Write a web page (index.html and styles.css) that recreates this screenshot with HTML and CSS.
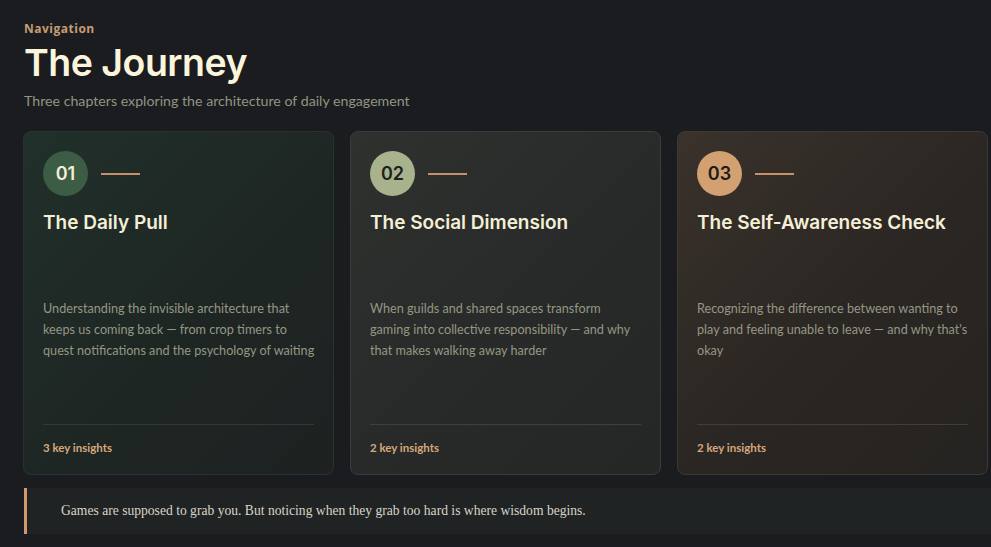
FILE: index.html
```html
<!DOCTYPE html>
<html lang="en">
<head>
<meta charset="utf-8">
<title>The Journey</title>
<link rel="stylesheet" href="styles.css">
</head>
<body>
<main class="page">
  <header class="intro">
    <div class="eyebrow">Navigation</div>
    <h1 class="title">The Journey</h1>
    <p class="subtitle">Three chapters exploring the architecture of daily engagement</p>
  </header>

  <section class="cards">
    <article class="card card-green">
      <div class="card-head">
        <span class="num num-green">01</span>
        <span class="rule"></span>
      </div>
      <h2 class="card-title">The Daily Pull</h2>
      <p class="card-desc">Understanding the invisible architecture that keeps us coming back — from crop timers to quest notifications and the psychology of waiting</p>
      <div class="card-foot">3 key insights</div>
    </article>
    <article class="card card-sage">
      <div class="card-head">
        <span class="num num-sage">02</span>
        <span class="rule"></span>
      </div>
      <h2 class="card-title">The Social Dimension</h2>
      <p class="card-desc">When guilds and shared spaces transform gaming into collective responsibility — and why that makes walking away harder</p>
      <div class="card-foot">2 key insights</div>
    </article>
    <article class="card card-tan">
      <div class="card-head">
        <span class="num num-tan">03</span>
        <span class="rule"></span>
      </div>
      <h2 class="card-title">The Self-Awareness Check</h2>
      <p class="card-desc">Recognizing the difference between wanting to play and feeling unable to leave — and why that's okay</p>
      <div class="card-foot">2 key insights</div>
    </article>
  </section>

  <blockquote class="quote">Games are supposed to grab you. But noticing when they grab too hard is where wisdom begins.</blockquote>
</main>
</body>
</html>
```

FILE: styles.css
```css
* { box-sizing: border-box; }
html, body { margin: 0; padding: 0; }
body {
  background: #1b1c20;
  font-family: Lato, "Open Sans", sans-serif;
  color: #e9e4cf;
  overflow: hidden;
  width: 991px;
  height: 547px;
}
.page {
  padding: 21px 0 0 23px;
  width: 1010px;
}
.intro { padding-left: 1px; }
.eyebrow {
  font-family: "Open Sans", sans-serif;
  font-size: 12px;
  line-height: 16px;
  font-weight: 700;
  letter-spacing: 0.5px;
  color: #c89c74;
}
.title {
  margin: 3px 0 0;
  font-family: Inter, sans-serif;
  font-size: 37.5px;
  line-height: 46px;
  font-weight: 600;
  letter-spacing: -0.5px;
  color: #fbf5dc;
}
.subtitle {
  margin: 5px 0 0;
  font-size: 14.2px;
  line-height: 20px;
  font-weight: 400;
  color: #8f9584;
}
.cards {
  display: grid;
  grid-template-columns: 311px 311px 311px;
  gap: 16px;
  margin-top: 20px;
}
.card {
  height: 344px;
  border-radius: 8px;
  border: 1px solid #2b302f;
  padding: 19px 17px 18px 19px;
  display: flex;
  flex-direction: column;
}
.card-green {
  background: linear-gradient(135deg, #21302a 0%, #1e2624 55%, #1d2221 100%);
  border-color: #283230;
}
.card-sage {
  background: linear-gradient(135deg, #2e312e 0%, #272a28 55%, #242726 100%);
  border-color: #3a3d3a;
}
.card-tan {
  background: linear-gradient(135deg, #3a322b 0%, #2a2623 55%, #252321 100%);
  border-color: #3c3834;
}
.card-head {
  display: flex;
  align-items: center;
  gap: 13px;
}
.num {
  width: 45px;
  height: 45px;
  border-radius: 50%;
  display: flex;
  align-items: center;
  justify-content: center;
  font-family: Inter, sans-serif;
  font-size: 18px;
  font-weight: 600;
}
.num-green { background: #3d5c45; color: #f3eed8; }
.num-sage { background: #a8b28d; color: #1d201c; }
.num-tan { background: #d3a072; color: #1d1a17; }
.rule {
  width: 39px;
  height: 2px;
  background: #c8906a;
}
.card-title {
  margin: 15px 0 0;
  font-family: Inter, sans-serif;
  font-size: 19px;
  line-height: 24px;
  font-weight: 600;
  color: #f5efd7;
}
.card-desc {
  margin: 63px 0 0;
  font-size: 12.65px;
  line-height: 21px;
  font-weight: 400;
  color: #959784;
}
.card-foot {
  margin-top: auto;
  margin-right: 2px;
  border-top: 1px solid #343837;
  padding-top: 15px;
  font-size: 11.5px;
  line-height: 16px;
  font-weight: 700;
  color: #d6a87c;
}
.card-sage .card-foot { border-color: #3d403d; }
.card-tan .card-foot { border-color: #433d38; }
.quote {
  margin: 13px 0 0 1px;
  height: 46px;
  border-left: 3px solid #d09a6c;
  background: #1f2324;
  padding: 0 0 0 34px;
  display: flex;
  align-items: center;
  font-family: "Liberation Serif", serif;
  font-size: 13.6px;
  color: #d9d4c6;
}
```
